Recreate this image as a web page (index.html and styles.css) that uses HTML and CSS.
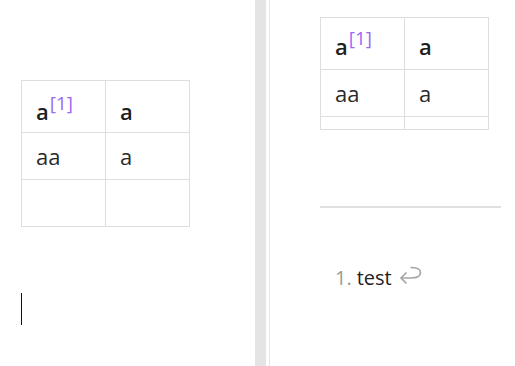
FILE: index.html
```html
<!DOCTYPE html>
<html>
<head>
<meta charset="utf-8">
<link rel="stylesheet" href="styles.css">
</head>
<body>
<div class="pane left">
  <table class="grid">
    <tr><th>a<sup class="fn">[1]</sup></th><th>a</th></tr>
    <tr><td>aa</td><td>a</td></tr>
    <tr><td><br></td><td><br></td></tr>
  </table>
  <div class="caret"></div>
</div>
<div class="divider"></div>
<div class="pane right">
  <table class="grid preview">
    <tr><th>a<sup class="fn">[1]</sup></th><th>a</th></tr>
    <tr><td>aa</td><td>a</td></tr>
    <tr><td></td><td></td></tr>
  </table>
  <div class="rule"></div>
  <div class="note">
    <span class="num">1.</span>
    <span class="txt">test</span>
    <svg class="back" width="23" height="19" viewBox="0 0 23 19"><path d="M11.5 1.5 C18 1.5 21.5 3.5 21.5 6.5 C21.5 10 18 12 12 12 H2" fill="none" stroke="#a6a6a6" stroke-width="1.7"/><path d="M7.5 6.5 L2 12 L7.5 17.5" fill="none" stroke="#a6a6a6" stroke-width="1.7"/></svg>
  </div>
</div>
</body>
</html>
```
FILE: styles.css
```css
html, body {
  margin: 0;
  padding: 0;
  background: #fff;
}
body {
  display: flex;
  height: 366px;
  overflow: hidden;
  font-family: "Open Sans", "Noto Sans", sans-serif;
  color: #222;
}
.pane {
  display: flex;
  flex-direction: column;
  align-items: flex-start;
}
.left {
  width: 255px;
  padding: 80px 0 0 21px;
  box-sizing: border-box;
}
.divider {
  width: 11px;
  background: #e4e4e4;
}
.right {
  flex: 1;
  margin-left: 3px;
  border-left: 1px solid #e6e6e6;
  padding: 17px 0 0 50px;
}
.grid {
  border-collapse: collapse;
  font-size: 22px;
  width: 169px;
  table-layout: fixed;
}
.grid th, .grid td {
  border: 1px solid #dedede;
  text-align: left;
  padding: 6px 14px;
  line-height: 34px;
  vertical-align: top;
  width: 50%;
  color: #2a2a2a;
}
.grid th {
  font-weight: 600;
  padding: 13px 14px 4px;
  color: #1e1e1e;
}
.preview th {
  padding: 11px 14px 6px;
}
.fn {
  font-size: 19px;
  font-weight: 400;
  color: #9a6af5;
  line-height: 0;
  vertical-align: 10px;
  margin-left: 1px;
}
.caret {
  width: 1px;
  height: 32px;
  background: #111;
  margin-top: 66px;
}
.rule {
  width: 181px;
  height: 2px;
  background: #e0e0e0;
  margin-top: 76px;
}
.note {
  display: flex;
  align-items: baseline;
  margin: 58px 0 0 15px;
  font-size: 20px;
  line-height: 24px;
}
.num {
  color: #9a9a9a;
  margin-right: 5px;
}
.txt {
  color: #222;
}
.back {
  margin-left: 7px;
}
```
